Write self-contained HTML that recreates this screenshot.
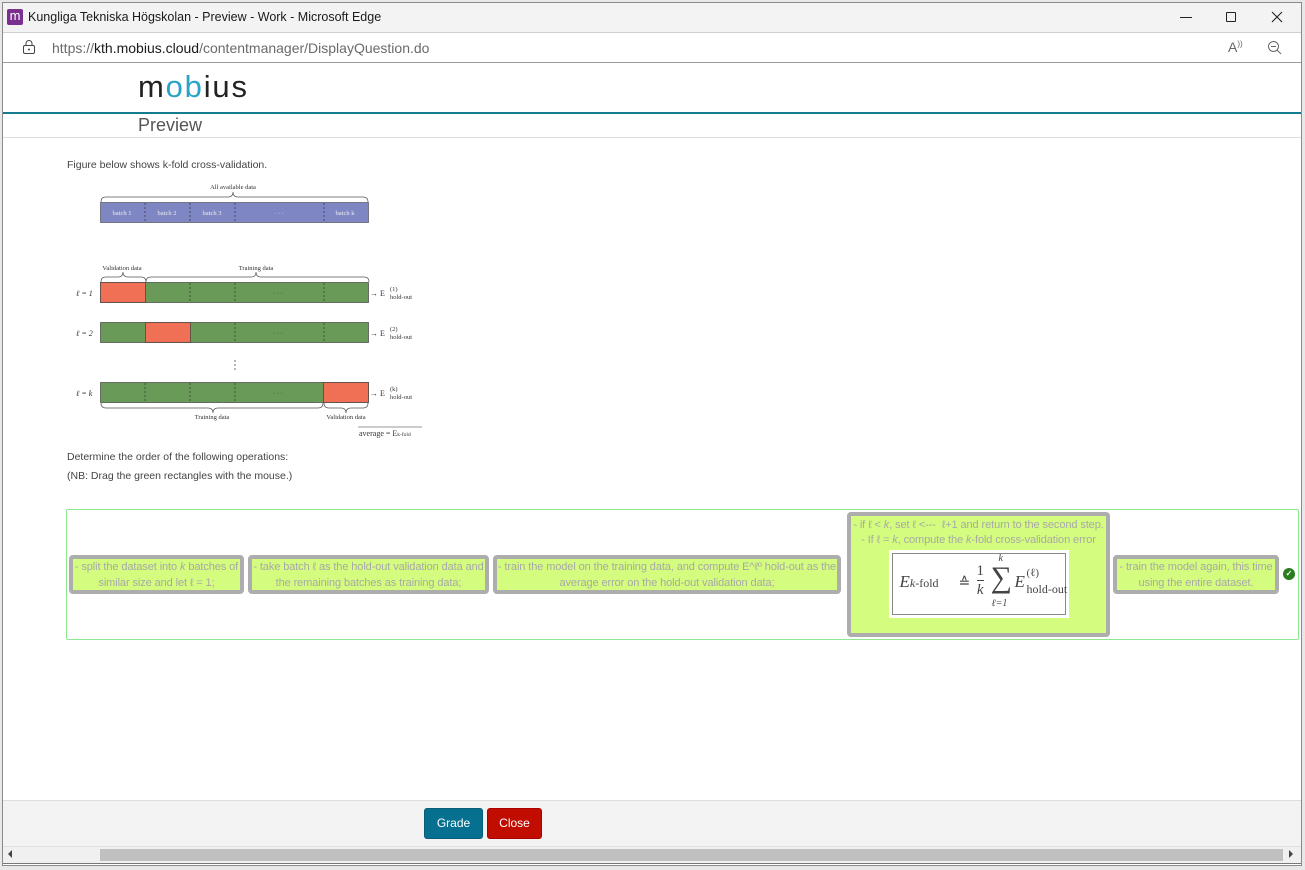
<!DOCTYPE html>
<html><head><meta charset="utf-8"><style>
*{margin:0;padding:0;box-sizing:border-box}
body{width:1305px;height:870px;overflow:hidden;background:#fff;font-family:"Liberation Sans",sans-serif;position:relative}
.a{position:absolute}
.item{position:absolute;background:#d4fc7f;border:4px solid #adadad;border-radius:4px;color:#a8a8a8;font-size:11px;line-height:16px;text-align:center;display:flex;align-items:center;justify-content:center;letter-spacing:-0.1px;white-space:nowrap;overflow:hidden}
</style></head><body>
<div class="a" style="left:0;top:0;width:1305px;height:870px;background:#e8e8e8"></div>
<div class="a" style="left:2px;top:2px;width:1300px;height:864px;background:#fff;border:1px solid #8a8a8a"></div>
<div class="a" style="left:3px;top:3px;width:1298px;height:30px;background:#f3f3f3;border-bottom:1px solid #d0d0d0"></div>
<div class="a" style="left:7px;top:9px;width:16px;height:16px;background:#7b2f8e;border-radius:2px;color:#fff;font-size:13px;line-height:14px;text-align:center">m</div>
<div class="a" style="left:28px;top:10px;font-size:12.5px;color:#1a1a1a">Kungliga Tekniska Högskolan - Preview - Work - Microsoft Edge</div>
<div class="a" style="left:1180px;top:17px;width:12px;height:1px;background:#222"></div>
<div class="a" style="left:1226px;top:12px;width:10px;height:10px;border:1px solid #222;border-radius:1px"></div>
<svg class="a" style="left:1271px;top:11px" width="12" height="12"><path d="M1 1l10 10M11 1L1 11" stroke="#222" stroke-width="1.1"/></svg>
<svg class="a" style="left:22px;top:39px" width="14" height="16"><rect x="1.5" y="6.5" width="11" height="8" rx="1.5" fill="none" stroke="#444"/><path d="M4 6.5V4.5a3 3 0 0 1 6 0v2" fill="none" stroke="#444"/><circle cx="7" cy="10.5" r="1" fill="#444"/></svg>
<div class="a" style="left:52px;top:40px;font-size:14px;color:#6a6a6a">https://<span style="color:#1a1a1a">kth.mobius.cloud</span>/contentmanager/DisplayQuestion.do</div>
<div class="a" style="left:1228px;top:39px;font-size:14px;color:#666">A<sup style="font-size:8px">))</sup></div>
<svg class="a" style="left:1267px;top:40px" width="16" height="16"><circle cx="6.5" cy="6.5" r="5" fill="none" stroke="#666"/><path d="M4 6.5h5M10 10l4 4" stroke="#666"/></svg>
<div class="a" style="left:3px;top:62px;width:1298px;height:1px;background:#9a9a9a"></div>
<div class="a" style="left:138px;top:71px;font-size:31px;line-height:32px;color:#222;letter-spacing:1.8px">m<span style="color:#2aa3c7">ob</span>ius</div>
<div class="a" style="left:3px;top:112px;width:1298px;height:2px;background:#167a92"></div>
<div class="a" style="left:138px;top:115px;font-size:18px;color:#555">Preview</div>
<div class="a" style="left:3px;top:137px;width:1298px;height:1px;background:#ddd"></div>
<div class="a" style="left:67px;top:159px;font-size:10.5px;color:#444">Figure below shows k-fold cross-validation.</div>
<svg class="a" style="left:60px;top:180px" width="370" height="260" font-family="Liberation Serif" font-size="6.5" fill="#333">
<text x="173" y="9" text-anchor="middle">All available data</text>
<path d="M41 22q0-5 5-5h122q5 0 5-5q0 5 5 5h125q5 0 5 5" fill="none" stroke="#555" stroke-width=".7"/>
<rect x="40.5" y="22.5" width="268" height="20" fill="#7f86c4" stroke="#555" stroke-width=".7"/>
<g stroke="#333" stroke-dasharray="2 2" stroke-width=".7"><path d="M85 23v19M130 23v19M175 23v19M264 23v19"/></g>
<g fill="#eee"><text x="62" y="35" text-anchor="middle">batch 1</text><text x="107" y="35" text-anchor="middle">batch 2</text><text x="152" y="35" text-anchor="middle">batch 3</text><text x="219" y="35" text-anchor="middle">· · ·</text><text x="285" y="35" text-anchor="middle">batch k</text></g>
<text x="62" y="90" text-anchor="middle">Validation data</text><text x="196" y="90" text-anchor="middle">Training data</text>
<path d="M41 102q0-5 5-5h12q5 0 5-5q0 5 5 5h13q5 0 5 5M86 102q0-5 5-5h100q5 0 5-5q0 5 5 5h103q5 0 5 5" fill="none" stroke="#555" stroke-width=".7"/>
<g stroke="#444" stroke-width=".7">
<rect x="40.5" y="102.5" width="268" height="20" fill="#6a9a58"/><rect x="40.5" y="102.5" width="45" height="20" fill="#ef7054"/>
<rect x="40.5" y="142.5" width="268" height="20" fill="#6a9a58"/><rect x="85.5" y="142.5" width="45" height="20" fill="#ef7054"/>
<rect x="40.5" y="202.5" width="268" height="20" fill="#6a9a58"/><rect x="263.5" y="202.5" width="45" height="20" fill="#ef7054"/>
</g>
<g stroke="#333" stroke-dasharray="2 2" stroke-width=".7"><path d="M130 103v19M175 103v19M264 103v19M175 143v19M264 143v19M85 203v19M130 203v19M175 203v19M175 180v10"/></g>
<text x="218" y="115" text-anchor="middle">· · ·</text><text x="218" y="155" text-anchor="middle">· · ·</text><text x="218" y="215" text-anchor="middle">· · ·</text>
<g font-size="8" font-style="italic"><text x="16" y="116">ℓ = 1</text><text x="16" y="156">ℓ = 2</text><text x="16" y="216">ℓ = k</text></g>
<g font-size="8"><text x="310" y="116">→ E</text><text x="310" y="156">→ E</text><text x="310" y="216">→ E</text></g>
<g font-size="6.5"><text x="330" y="111">(1)</text><text x="330" y="119">hold-out</text><text x="330" y="151">(2)</text><text x="330" y="159">hold-out</text><text x="330" y="211">(k)</text><text x="330" y="219">hold-out</text></g>
<path d="M41 223q0 5 5 5h102q5 0 5 5q0 -5 5-5h100q5 0 5-5M264 223q0 5 5 5h12q5 0 5 5q0-5 5-5h12q5 0 5-5" fill="none" stroke="#555" stroke-width=".7"/>
<text x="152" y="239" text-anchor="middle">Training data</text><text x="286" y="239" text-anchor="middle">Validation data</text>
<path d="M298 247h64" stroke="#333" stroke-width=".6"/><text x="299" y="256" font-size="8">average = E<tspan font-size="5.5">k-fold</tspan></text>
</svg>
<div class="a" style="left:67px;top:451px;font-size:10.5px;color:#444">Determine the order of the following operations:</div>
<div class="a" style="left:67px;top:470px;font-size:10.5px;color:#444">(NB: Drag the green rectangles with the mouse.)</div>
<div class="a" style="left:66px;top:509px;width:1233px;height:131px;border:1px solid #8fe88f;border-radius:2px"></div>
<div class="item" style="left:69px;top:555px;width:175px;height:39px"><div>- split the dataset into <i>k</i> batches of<br>similar size and let ℓ = 1;</div></div>
<div class="item" style="left:248px;top:555px;width:241px;height:39px"><div>- take batch ℓ as the hold-out validation data and<br>the remaining batches as training data;</div></div>
<div class="item" style="left:493px;top:555px;width:348px;height:39px"><div>- train the model on the training data, and compute E^ℓº hold-out as the<br>average error on the hold-out validation data;</div></div>
<div class="item" style="left:847px;top:512px;width:263px;height:125px;align-items:flex-start;padding-top:2px"><div style="line-height:15px">- if ℓ &lt; <i>k</i>, set ℓ &lt;---&nbsp; ℓ+1 and return to the second step.<br>- If ℓ = <i>k</i>, compute the <i>k</i>-fold cross-validation error
<div style="margin:2px auto 0;width:180px;height:68px;background:#fff;padding:3px"><div style="border:1px solid #888;height:62px;color:#444;font-family:'Liberation Serif',serif;position:relative;white-space:nowrap;letter-spacing:0">
<span class="a" style="left:7px;top:20px;font-size:17px;font-style:italic">E<span style="font-size:12px">k</span><span style="font-size:12px;font-style:normal">-fold</span></span>
<span class="a" style="left:66px;top:22px;font-size:14px">≙</span>
<span class="a" style="left:84px;top:8px;font-size:15px;line-height:18px;text-align:center">1<br><span style="display:block;border-top:1px solid #444;font-style:italic">k</span></span>
<span class="a" style="left:106px;top:0px;font-size:10px;font-style:italic;line-height:10px">k</span>
<span class="a" style="left:98px;top:8px;font-size:30px;line-height:32px">∑</span>
<span class="a" style="left:99px;top:44px;font-size:10px;font-style:italic;line-height:12px">ℓ=1</span>
<span class="a" style="left:122px;top:20px;font-size:17px;font-style:italic">E</span>
<span class="a" style="left:134px;top:12px;font-size:11px">(ℓ)</span>
<span class="a" style="left:134px;top:28px;font-size:12px">hold-out</span>
</div></div></div></div>
<div class="item" style="left:1113px;top:555px;width:166px;height:39px"><div>- train the model again, this time<br>using the entire dataset.</div></div>
<div class="a" style="left:1283px;top:568px;width:12px;height:12px;border-radius:50%;background:#2a7d1e;color:#fff;font-size:8px;line-height:12px;text-align:center;font-weight:bold">✓</div>
<div class="a" style="left:3px;top:800px;width:1298px;height:46px;background:#f3f3f3;border-top:1px solid #ddd"></div>
<div class="a" style="left:424px;top:808px;width:59px;height:31px;background:#05708f;border:1px solid #0a5d75;border-radius:3px;color:#fff;font-size:12px;line-height:29px;text-align:center">Grade</div>
<div class="a" style="left:487px;top:808px;width:55px;height:31px;background:#c00d00;border:1px solid #a00;border-radius:3px;color:#fff;font-size:12px;line-height:29px;text-align:center">Close</div>
<div class="a" style="left:3px;top:846px;width:1298px;height:17px;background:#f0f0f0;border-top:1px solid #e0e0e0"></div>
<div class="a" style="left:100px;top:849px;width:1183px;height:12px;background:#c0c0c0"></div>
<div class="a" style="left:8px;top:850px;width:0;height:0;border-top:4px solid transparent;border-bottom:4px solid transparent;border-right:4px solid #444"></div>
<div class="a" style="left:1289px;top:850px;width:0;height:0;border-top:4px solid transparent;border-bottom:4px solid transparent;border-left:4px solid #444"></div>
<div class="a" style="left:3px;top:863px;width:1298px;height:1px;background:#777"></div>
</body></html>
